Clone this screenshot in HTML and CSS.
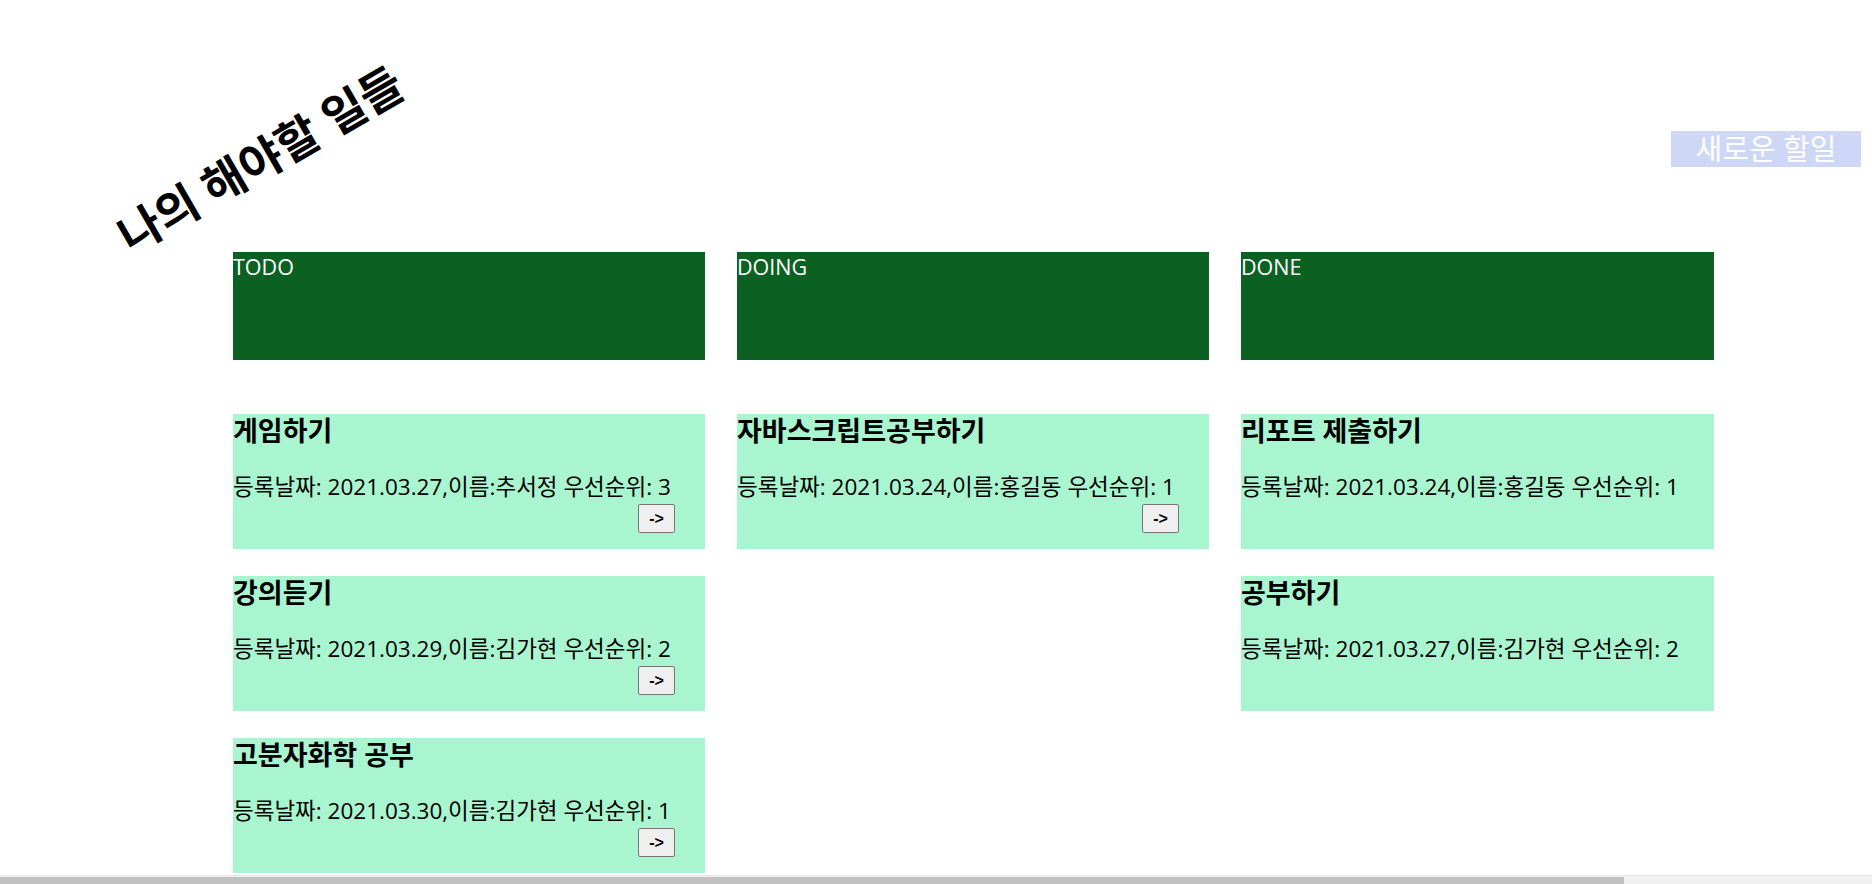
FILE: index.html
```html
<!DOCTYPE html>
<html lang="ko">
<head>
<meta charset="utf-8">
<title>나의 해야할 일들</title>
<link rel="stylesheet" href="styles.css">
</head>
<body>
<header class="top">
  <h1 class="page-title">나의 해야할 일들</h1>
  <div class="new-todo">새로운 할일</div>
</header>
<main class="board">
  <section class="column">
    <div class="column-head">TODO</div>
    <ul class="cards">
      <li class="card">
        <h3 class="card-title">게임하기</h3>
        <p class="card-info">등록날짜: 2021.03.27,이름:추서정 우선순위: 3</p>
        <div class="card-actions"><button class="move-btn">-&gt;</button></div>
      </li>
      <li class="card">
        <h3 class="card-title">강의듣기</h3>
        <p class="card-info">등록날짜: 2021.03.29,이름:김가현 우선순위: 2</p>
        <div class="card-actions"><button class="move-btn">-&gt;</button></div>
      </li>
      <li class="card">
        <h3 class="card-title">고분자화학 공부</h3>
        <p class="card-info">등록날짜: 2021.03.30,이름:김가현 우선순위: 1</p>
        <div class="card-actions"><button class="move-btn">-&gt;</button></div>
      </li>
    </ul>
  </section>
  <section class="column">
    <div class="column-head">DOING</div>
    <ul class="cards">
      <li class="card">
        <h3 class="card-title">자바스크립트공부하기</h3>
        <p class="card-info">등록날짜: 2021.03.24,이름:홍길동 우선순위: 1</p>
        <div class="card-actions"><button class="move-btn">-&gt;</button></div>
      </li>
    </ul>
  </section>
  <section class="column">
    <div class="column-head">DONE</div>
    <ul class="cards">
      <li class="card">
        <h3 class="card-title">리포트 제출하기</h3>
        <p class="card-info">등록날짜: 2021.03.24,이름:홍길동 우선순위: 1</p>
      </li>
      <li class="card">
        <h3 class="card-title">공부하기</h3>
        <p class="card-info">등록날짜: 2021.03.27,이름:김가현 우선순위: 2</p>
      </li>
    </ul>
  </section>
</main>
<div class="hscroll"><div class="hscroll-thumb"></div></div>
</body>
</html>
```
FILE: styles.css
```css
html, body {
  overflow: hidden;
}
body {
  margin: 8px;
  background: #ffffff;
  color: #000000;
  font-family: "Open Sans", "Noto Sans CJK KR", sans-serif;
}
.top {
  display: flex;
  align-items: flex-start;
  justify-content: space-between;
  padding-top: 121px;
}
.page-title {
  margin: -2px 0 0 92px;
  font-size: 46px;
  font-weight: 700;
  line-height: 64px;
  white-space: nowrap;
  transform: rotate(-30deg);
  transform-origin: center center;
}
.new-todo {
  margin-top: 2px;
  margin-right: 3px;
  width: 190px;
  height: 36px;
  line-height: 36px;
  text-align: center;
  font-size: 29px;
  color: #ffffff;
  background: #ced8f6;
}
.board {
  display: grid;
  grid-template-columns: 472px 472px 473px;
  column-gap: 32px;
  margin: 61px 0 0 225px;
}
.column-head {
  height: 108px;
  background: #0b6121;
  color: #ffffff;
  font-size: 21.5px;
}
.cards {
  list-style: none;
  margin: 54px 0 0;
  padding: 0;
  display: flex;
  flex-direction: column;
  gap: 27px;
}
.card {
  height: 135px;
  background: #a9f5d0;
}
.card-title {
  margin: 0;
  font-size: 27px;
  font-weight: 700;
  line-height: 34px;
}
.card-info {
  margin: 24px 0 0;
  font-size: 22.5px;
  line-height: 30px;
}
.card-actions {
  margin-top: 2px;
  padding-right: 30px;
  text-align: right;
  line-height: 0;
}
.move-btn {
  width: 37px;
  height: 29px;
  padding: 0;
  font-family: "Liberation Sans", sans-serif;
  font-size: 16px;
  font-weight: 700;
  color: #000000;
  background: #efefef;
  border: 1px solid #767676;
  border-radius: 2px;
}
.hscroll {
  position: fixed;
  left: 0;
  right: 0;
  bottom: 0;
  height: 9px;
  background: #f0f0f0;
  border-top: 1px solid #e6e6e6;
  box-sizing: border-box;
}
.hscroll-thumb {
  width: 1624px;
  height: 7px;
  margin-top: 1px;
  background: #c1c1c1;
}
```
